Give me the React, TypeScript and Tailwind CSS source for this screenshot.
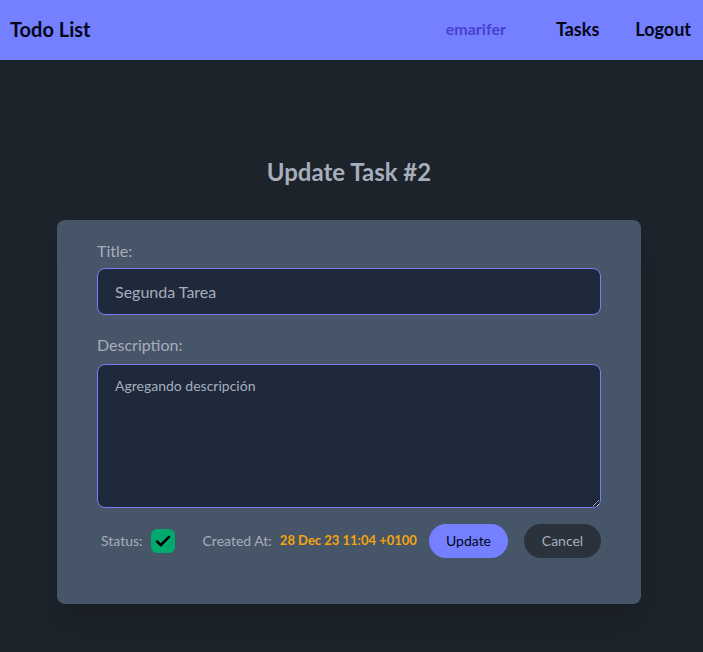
import * as React from 'react';

// Barre de navigation
function Navbar() {
  return (
    <nav className="flex h-[60px] items-center justify-between bg-[#7480ff] pb-[3px] pl-[10px] pr-[12px]">
      <span className="text-xl font-bold text-[#050617]">Todo List</span>
      <div className="flex items-center">
        <span className="mr-[50px] text-base font-bold text-[#4a3fd0]">emarifer</span>
        <span className="mr-[36px] text-lg font-bold text-[#050617]">Tasks</span>
        <span className="text-lg font-bold text-[#050617]">Logout</span>
      </div>
    </nav>
  );
}

export default function App() {
  const [done, setDone] = React.useState(true);

  return (
    <div
      className="min-h-[652px] bg-[#1d232a] text-[#a6adbb]"
      style={{ fontFamily: 'Lato, sans-serif' }}
    >
      <Navbar />
      <main className="flex flex-col items-center pr-[5px]">
        <h1 className="mt-[96px] text-2xl font-bold text-[#a6adbb]">Update Task #2</h1>
        <form className="mt-[32px] w-[584px] rounded-lg bg-[#475569] px-[40px] pb-[46px] pt-[19px] shadow-xl">
          <label className="block text-base text-[#a6adbb]">Title:</label>
          <input
            type="text"
            defaultValue="Segunda Tarea"
            className="mt-[5px] h-[47px] w-full rounded-lg border border-[#7480ff] bg-[#1e293b] px-[17px] text-base text-[#a6adbb] outline-none"
          />
          <label className="mt-[18px] block text-base text-[#a6adbb]">Description:</label>
          <textarea
            defaultValue="Agregando descripción"
            className="mt-[7px] block h-[144px] w-full resize-y rounded-lg border border-[#7480ff] bg-[#1e293b] px-[17px] py-[11px] text-sm text-[#a6adbb] outline-none"
          />
          <div className="mt-[16px] flex items-center whitespace-nowrap">
            <span className="ml-[4px] text-sm text-[#a6adbb]">Status:</span>
            <button
              type="button"
              onClick={() => setDone(!done)}
              className={`ml-[8px] flex h-6 w-6 items-center justify-center rounded-md ${done ? 'bg-[#00a96e]' : 'border border-[#a6adbb]'}`}
            >
              {done && (
                <svg viewBox="0 0 24 24" className="h-[18px] w-[18px]" fill="none" stroke="#000" strokeWidth="3.5" strokeLinecap="round" strokeLinejoin="round">
                  <path d="M4 12.5l5 5L20 6.5" />
                </svg>
              )}
            </button>
            <span className="ml-[28px] text-sm text-[#a6adbb]">Created At:</span>
            <span className="ml-[8px] text-[13px] font-bold text-[#f5a50b]">28 Dec 23 11:04 +0100</span>
            <button type="button" className="ml-auto h-[34px] w-[79px] rounded-full bg-[#7480ff] text-sm text-[#050617]">
              Update
            </button>
            <button type="button" className="ml-[16px] h-[34px] w-[77px] rounded-full bg-[#2a323c] text-sm text-[#a6adbb]">
              Cancel
            </button>
          </div>
        </form>
      </main>
    </div>
  );
}
